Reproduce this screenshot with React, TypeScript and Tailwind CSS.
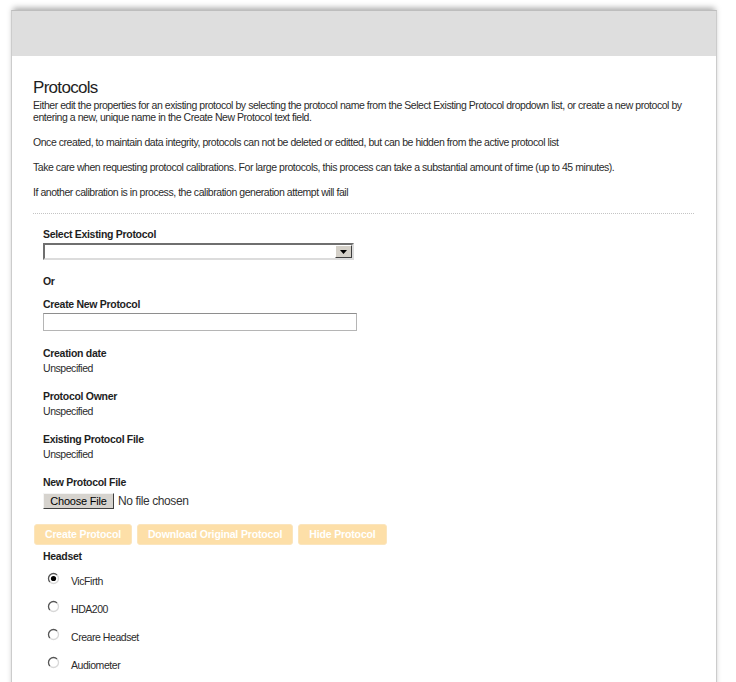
import React from "react";

const font = "font-['Liberation_Sans',Arial,sans-serif]";

const Radio = ({ checked }: { checked?: boolean }) => (
  <svg width="13" height="13" viewBox="0 0 13 13" className="mb-[6px] ml-[4px] shrink-0">
    <circle cx="6.5" cy="6.5" r="5" fill="#fff" />
    <path d="M2.96 10.04 A5 5 0 0 1 10.04 2.96" fill="none" stroke="#555" strokeWidth="1.3" />
    <path d="M10.04 2.96 A5 5 0 0 1 2.96 10.04" fill="none" stroke="#d8d8d8" strokeWidth="1.3" />
    {checked && <circle cx="6.5" cy="6.5" r="2.6" fill="#000" />}
  </svg>
);

const Label = ({ children, className = "" }: { children: React.ReactNode; className?: string }) => (
  <div className={`font-bold text-[#1e1e1e] leading-[12px] tracking-[-0.3px] ${className}`}>{children}</div>
);

const Field = ({ label }: { label: string }) => (
  <div className="mt-[16px]">
    <Label>{label}</Label>
    <div className="mt-[3px] leading-[12px]">Unspecified</div>
  </div>
);

const headsets = ["VicFirth", "HDA200", "Creare Headset", "Audiometer"];

export default function App() {
  return (
    <div className={`${font} bg-white min-h-screen pt-[10px] text-[10.5px] tracking-[-0.45px] text-[#2b2b2b]`}>
      <div className="ml-[11px] w-[706px] border-x border-t border-x-[#cccccc] border-t-[#bdbdbd] shadow-[0_-4px_6px_-2px_rgba(0,0,0,0.35)] pb-[40px]">
        <div className="h-[45px] bg-[#dedede]" />
        <div className="pl-[21px] pr-[22px] pt-[21px]">
          <h1 className="text-[17px] leading-[22px] tracking-[-0.7px] text-[#1e1e1e] font-normal">Protocols</h1>
          <p className="leading-[12px] mb-[13px]">
            Either edit the properties for an existing protocol by selecting the protocol name from the Select Existing Protocol dropdown list, or create a new protocol by entering a new, unique name in the Create New Protocol text field.
          </p>
          <p className="leading-[12px] mb-[13px]">
            Once created, to maintain data integrity, protocols can not be deleted or editted, but can be hidden from the active protocol list
          </p>
          <p className="leading-[12px] mb-[13px]">
            Take care when requesting protocol calibrations. For large protocols, this process can take a substantial amount of time (up to 45 minutes).
          </p>
          <p className="leading-[12px]">If another calibration is in process, the calibration generation attempt will fail</p>

          <div className="mt-[15px] border-t border-dotted border-[#c4c4c4]" />

          <div className="pl-[10px] pt-[14px]">
            <Label>Select Existing Protocol</Label>
            <div className="relative mt-[3px] w-[311px] h-[17px] border-2 border-t-[#6f6f6f] border-l-[#6f6f6f] border-b-[#dcdcdc] border-r-[#dcdcdc] bg-white">
              <div className="absolute right-0 top-0 w-[17px] h-[13px] bg-[#d4d0c8] border border-t-white border-l-white border-b-[#404040] border-r-[#404040] flex items-center justify-center">
                <svg width="7" height="4" viewBox="0 0 7 4">
                  <path d="M0 0H7L3.5 4Z" fill="#000" />
                </svg>
              </div>
            </div>

            <Label className="mt-[15px]">Or</Label>
            <Label className="mt-[11px]">Create New Protocol</Label>
            <div className="mt-[3px] w-[314px] h-[18px] border border-[#b5b5b5] border-t-[#8e8e8e] bg-white" />

            <Field label="Creation date" />
            <Field label="Protocol Owner" />
            <Field label="Existing Protocol File" />

            <Label className="mt-[16px]">New Protocol File</Label>
            <div className="mt-[4px] flex items-center gap-[4px]">
              <button className="w-[71px] h-[16px] bg-[#d6d3ce] border border-t-[#f4f4f4] border-l-[#f4f4f4] border-b-[#404040] border-r-[#404040] text-[11px] leading-[12px] tracking-[-0.2px] text-black">
                Choose File
              </button>
              <span className="text-[12px] tracking-[-0.4px] text-[#333]">No file chosen</span>
            </div>
          </div>

          <div className="mt-[14px] ml-[1px] flex gap-[5px]">
            {["Create Protocol", "Download Original Protocol", "Hide Protocol"].map((t) => (
              <button
                key={t}
                className="h-[21px] px-[10px] rounded-[3px] bg-[#fddfa8] border border-[#fbe5bd] text-white font-bold text-[10.5px] tracking-[-0.15px]"
              >
                {t}
              </button>
            ))}
          </div>

          <div className="pl-[10px]">
            <Label className="mt-[5px]">Headset</Label>
            <div className="mt-[5px]">
              {headsets.map((h, i) => (
                <div key={h} className="h-[28px] flex items-center">
                  <Radio checked={i === 0} />
                  <span className="ml-[11px] leading-[12px]">{h}</span>
                </div>
              ))}
            </div>
          </div>
        </div>
      </div>
    </div>
  );
}
